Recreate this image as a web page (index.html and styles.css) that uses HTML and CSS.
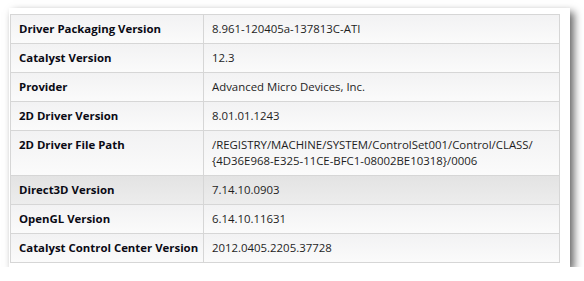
FILE: index.html
```html
<!DOCTYPE html>
<html>
<head>
<meta charset="utf-8">
<link rel="stylesheet" href="styles.css">
</head>
<body>
<div class="card">
  <table class="info">
    <tr><th>Driver Packaging Version</th><td>8.961-120405a-137813C-ATI</td></tr>
    <tr><th>Catalyst Version</th><td>12.3</td></tr>
    <tr><th>Provider</th><td>Advanced Micro Devices, Inc.</td></tr>
    <tr><th>2D Driver Version</th><td>8.01.01.1243</td></tr>
    <tr><th>2D Driver File Path</th><td>/REGISTRY/MACHINE/SYSTEM/ControlSet001/Control/CLASS/<br>{4D36E968-E325-11CE-BFC1-08002BE10318}/0006</td></tr>
    <tr class="hl"><th>Direct3D Version</th><td>7.14.10.0903</td></tr>
    <tr><th>OpenGL Version</th><td>6.14.10.11631</td></tr>
    <tr><th>Catalyst Control Center Version</th><td>2012.0405.2205.37728</td></tr>
  </table>
</div>
</body>
</html>
```
FILE: styles.css
```css
html, body {
  margin: 0;
  padding: 0;
  background: #ffffff;
}
body {
  padding: 8px 0 0 9px;
  font-family: "Open Sans", "Noto Sans", sans-serif;
  font-size: 11.4px;
}
.card {
  width: 550px;
  padding: 6px 10px 4px 1px;
  background: #ffffff;
  box-shadow: 4px 4px 8px rgba(0, 0, 0, 0.6);
}
.info {
  width: 550px;
  border-collapse: collapse;
  border: 1px solid #d6d6d6;
  table-layout: fixed;
}
.info tr {
  background: linear-gradient(#f2f2f3, #fbfbfb);
}
.info tr.hl {
  background: linear-gradient(#e3e3e3, #ededed);
}
.info th, .info td {
  border: 1px solid #d6d6d6;
  padding: 6px 8px;
  line-height: 16px;
  vertical-align: top;
  text-align: left;
}
.info th {
  width: 176px;
  font-weight: bold;
  color: #0a0a14;
  white-space: nowrap;
}
.info td {
  color: #1e1e1e;
}
```
